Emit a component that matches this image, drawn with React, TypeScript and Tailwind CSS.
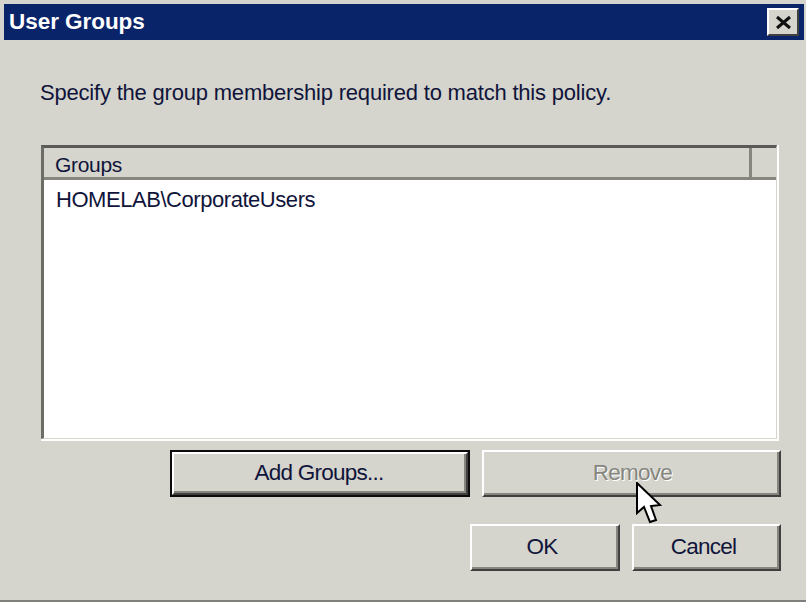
const font = "[font-family:'Liberation_Sans',Arial,sans-serif]";

function Btn({ label, className, textClass, dim, focus }: { label: string; className: string; textClass?: string; dim?: boolean; focus?: boolean }) {
  return (
    <div className={`${className} h-[47px] ${focus ? 'border-2 border-[#0c0c0c]' : ''}`}>
      <div className="h-full border-t-2 border-l-2 border-t-white border-l-white border-r-2 border-b-2 border-r-[#404040] border-b-[#404040]">
        <div className={`h-full flex items-center justify-center border-r-2 border-b-2 border-r-[#86867f] border-b-[#86867f] text-[22.5px] tracking-[-0.75px] ${textClass ?? ''}`}>
          {dim ? (
            <span className="text-[#86867f] [text-shadow:1px_1px_0_#ffffff]">{label}</span>
          ) : (
            <span className="text-[#10143a]">{label}</span>
          )}
        </div>
      </div>
    </div>
  );
}

export default function App() {
  return (
    <div className={`relative w-[806px] h-[602px] overflow-hidden bg-[#d5d5ce] ${font} flex flex-col`}>
      <div className="mt-[4px] ml-[4px] mr-[2px] h-[36px] bg-[#0a246a] flex items-center justify-between pl-[5px] pr-[5px]">
        <span className="text-white font-bold text-[22.5px] tracking-[-0.05px]">User Groups</span>
        <div className="w-[32px] h-[28px] bg-[#d5d5ce] border-t-2 border-l-2 border-t-white border-l-white border-r-2 border-b-2 border-r-[#404040] border-b-[#404040] flex items-center justify-center">
          <svg width="17" height="15" viewBox="0 0 17 15">
            <path d="M2 2 L15 13 M15 2 L2 13" stroke="#111" strokeWidth="3" />
          </svg>
        </div>
      </div>

      <p className="ml-[40px] mt-[38px] text-[22px] leading-[30px] tracking-[-0.2px] text-[#10143a]">
        Specify the group membership required to match this policy.
      </p>

      <div className="ml-[41px] mt-[37px] w-[738px] h-[296px] border-r-2 border-b-2 border-r-white border-b-white">
        <div className="h-full border-t-[3px] border-l-[3px] border-t-[#5a5a56] border-l-[#6d6d68] border-r border-b border-r-[#d5d5ce] border-b-[#d5d5ce] bg-white flex flex-col">
          <div className="h-[32px] bg-[#d5d5ce] flex border-b-[3px] border-b-[#86867f]">
            <div className="w-[708px] border-r-[3px] border-r-[#86867f] pl-[11px] pt-[4px] text-[21px] leading-[26px] tracking-[-0.3px] text-[#10143a]">
              Groups
            </div>
            <div className="flex-1" />
          </div>
          <div className="pl-[12px] pt-[5px] text-[22px] leading-[30px] tracking-[-0.45px] text-[#10143a]">
            HOMELAB\CorporateUsers
          </div>
        </div>
      </div>

      <div className="flex ml-[170px] mt-[9px] gap-[12px]">
        <Btn label="Add Groups..." className="w-[300px]" focus />
        <Btn label="Remove" className="w-[299px]" textClass="pl-[4px]" dim />
      </div>

      <div className="flex ml-[470px] mt-[27px] gap-[12px]">
        <Btn label="OK" className="w-[150px]" textClass="pr-[4px] pt-[1px]" />
        <Btn label="Cancel" className="w-[149px]" textClass="pr-[4px] pt-[1px]" />
      </div>

      <div className="mt-auto h-[2px] bg-[#807f7b]" />

      {/* mouse pointer over the Remove button */}
      <svg className="absolute left-[635px] top-[482px]" width="28" height="44" viewBox="0 0 28 44">
        <path d="M2 1 L2 31 L9 25 L15 40 L21 38 L16 24 L25 23 Z" fill="#fff" stroke="#000" strokeWidth="2" strokeLinejoin="miter" />
      </svg>
    </div>
  );
}
